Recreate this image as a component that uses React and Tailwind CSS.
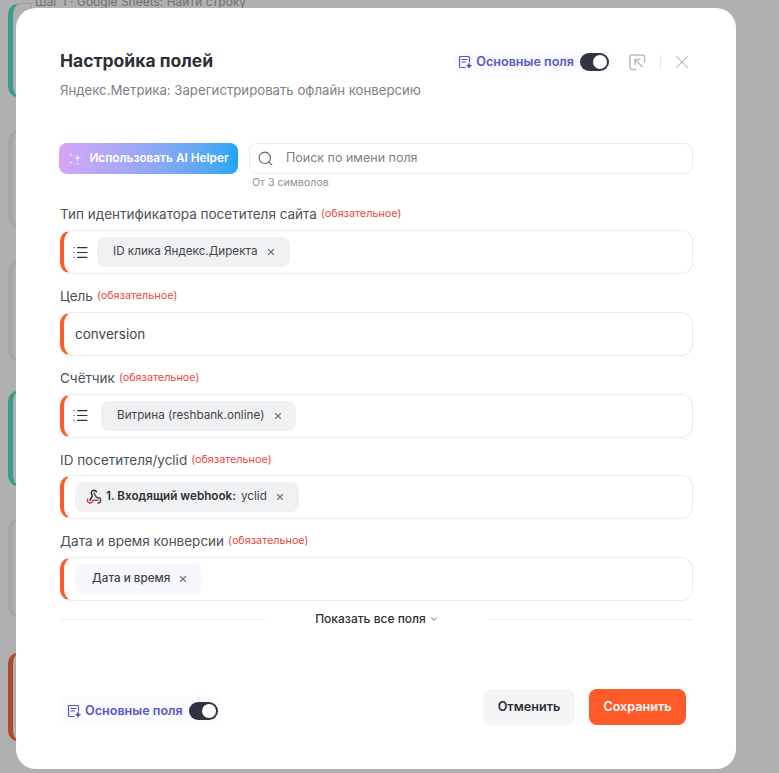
import { Search, X, List, ChevronDown } from 'lucide-react'

const font = { fontFamily: 'Inter, sans-serif' }

function FieldsIcon() {
  return (
    <svg width="14" height="14" viewBox="0 0 14 14" fill="none" stroke="#5856c8" strokeWidth="1.2" strokeLinecap="round" strokeLinejoin="round">
      <path d="M7 12.5H2.5a1 1 0 0 1-1-1v-9a1 1 0 0 1 1-1h8a1 1 0 0 1 1 1V7" />
      <path d="M4 4.5h5M4 7h3.5" />
      <path d="M11 8.5l.6 1.6 1.6.6-1.6.6-.6 1.6-.6-1.6-1.6-.6 1.6-.6z" fill="#5856c8" />
    </svg>
  )
}

function MainFields({ className }) {
  return (
    <div className={`flex items-center gap-[4px] rounded-lg bg-[#fafaff] ${className}`}>
      <FieldsIcon />
      <span className="text-[12.6px] font-semibold text-[#5856c8]">Основные поля</span>
      <div className="ml-[2px] flex h-[18px] w-[29px] items-center justify-end rounded-full bg-[#2f3440] pr-[2px]">
        <div className="h-[14px] w-[14px] rounded-full bg-white" />
      </div>
    </div>
  )
}

function Required() {
  return <span className="text-[10.8px] text-[#ef4444]">(обязательное)</span>
}

function Field({ label, children }) {
  return (
    <div>
      <div className="flex h-[19px] items-center gap-[4px] text-[13.5px] text-[#4b5157]">
        {label} <Required />
      </div>
      <div className="mt-[6px] flex h-[44px] items-center rounded-xl border border-[#e9ebee] border-l-[4px] border-l-[#ff5a29] bg-white pl-[1px]">
        {children}
      </div>
    </div>
  )
}

function Chip({ children, className }) {
  return (
    <div className={`flex h-[30px] items-center rounded-lg text-[11.7px] text-[#3f454b] ${className}`}>
      {children}
      <X size={10} strokeWidth={2.6} className="text-[#6b7177]" />
    </div>
  )
}

function ListIcon() {
  return <List size={17} strokeWidth={1.7} className="ml-[7px] mr-[8px] shrink-0 text-[#2b3036]" />
}

function WebhookIcon() {
  return (
    <svg width="16" height="16" viewBox="0 0 24 24" fill="none" strokeWidth="2.2" strokeLinecap="round" strokeLinejoin="round">
      <path stroke="#c73a63" d="M18 16.98h-5.99c-1.1 0-1.95.94-2.48 1.9A4 4 0 0 1 2 17c.01-.7.2-1.4.57-2" />
      <path stroke="#1f2328" d="m6 17 3.13-5.78c.53-.97.1-2.18-.5-3.1a4 4 0 1 1 6.89-4.06" />
      <path stroke="#4b4b4b" d="m12 6 3.13 5.73C15.66 12.7 16.9 13 18 13a4 4 0 0 1 0 8" />
    </svg>
  )
}

function Strip({ className }) {
  return <div className={`absolute left-[8px] w-[24px] rounded-l-xl border border-l-[5px] border-[#a2a2a2] ${className}`} />
}

export default function App() {
  return (
    <div className="relative h-[773px] w-[779px] overflow-hidden bg-[#b0b0b0]" style={font}>
      <div className="absolute left-[35px] top-[-7px] text-[12px] text-[#707070]">Шаг 1 · Google Sheets: Найти строку</div>
      <Strip className="top-[3px] h-[95px] border-l-[#3a9f8a]" />
      <Strip className="top-[130px] h-[98px] border-l-[#a6a6a6]" />
      <Strip className="top-[260px] h-[102px] border-l-[#a6a6a6]" />
      <Strip className="top-[390px] h-[97px] border-l-[#3a9f8a]" />
      <Strip className="top-[518px] h-[100px] border-l-[#a6a6a6]" />
      <Strip className="top-[652px] h-[90px] border-l-[#b04a2c]" />

      <div className="relative ml-[16px] mt-[8px] flex h-[761px] w-[720px] flex-col rounded-[20px] bg-white pl-[44px] pr-[43px] pt-[43px]">
        <div className="flex items-start justify-between">
          <div>
            <div className="text-[17.5px] font-bold leading-[20px] text-[#2b3036]">Настройка полей</div>
            <div className="mt-[10px] text-[13.2px] leading-[18px] text-[#7d8287]">Яндекс.Метрика: Зарегистрировать офлайн конверсию</div>
          </div>
          <div className="flex items-center">
            <MainFields className="h-[22px] pl-[4px] pr-[2px]" />
            <svg className="ml-[18px]" width="17" height="17" viewBox="0 0 17 17" fill="none" stroke="#bcbfc3" strokeWidth="1.6" strokeLinecap="round" strokeLinejoin="round">
              <path d="M15.5 8V3a2 2 0 0 0-2-2H3a2 2 0 0 0-2 2v10.5a2 2 0 0 0 2 2h4" />
              <path d="M6 5.5h5M6 5.5v5M6 5.5l7 7" />
            </svg>
            <div className="ml-[14px] h-[15px] w-px bg-[#e6e8ea]" />
            <X size={22} strokeWidth={1.1} className="ml-[10px] text-[#a9adb1]" />
          </div>
        </div>

        <div className="mt-[44px] flex items-start gap-[11px]">
          <button className="ml-[-1px] flex h-[31px] w-[179px] items-center justify-center gap-[7px] rounded-lg bg-gradient-to-r from-[#d6a5f7] to-[#19a7f5] text-[11.8px] font-semibold text-white">
            <svg width="14" height="14" viewBox="0 0 14 14" fill="#f3e9ff" opacity=".85">
              <path d="M9.5 2l.9 3.1 3.1.9-3.1.9-.9 3.1-.9-3.1L5.5 6l3.1-.9z" />
              <path d="M3 1l.5 1.5L5 3l-1.5.5L3 5l-.5-1.5L1 3l1.5-.5z" />
              <path d="M3 8.500l.5 1.500 1.500.5-1.500.5L3 12.500l-.5-1.500L1 10.500l1.500-.5z" />
              <path d="M9.500 10.500l.4 1.100 1.100.4-1.100.4-.4 1.100-.4-1.100L8 12l1.100-.4z" />
            </svg>
            Использовать AI Helper
          </button>
          <div className="flex-1">
            <div className="flex h-[31px] items-center rounded-lg border border-[#e9ebee] pl-[7px]">
              <Search size={17} strokeWidth={1.5} className="text-[#5c6166]" />
              <span className="ml-[12px] text-[12.5px] text-[#7d8287]">Поиск по имени поля</span>
            </div>
            <div className="ml-[3px] mt-[2px] text-[10.6px] leading-[14px] text-[#8c9196]">От 3 символов</div>
          </div>
        </div>

        <div className="mt-[15px] flex flex-col gap-[12.75px]">
          <Field label="Тип идентификатора посетителя сайта">
            <ListIcon />
            <Chip className="gap-[8px] bg-[#eff1f3] pl-[16px] pr-[14px]">ID клика Яндекс.Директа</Chip>
          </Field>
          <Field label="Цель">
            <span className="ml-[10px] text-[13.5px] text-[#3f454b]">conversion</span>
          </Field>
          <Field label="Счётчик">
            <ListIcon />
            <div className="ml-[4px]">
              <Chip className="gap-[9px] bg-[#eff1f3] pl-[16px] pr-[13px]">Витрина (reshbank.online)</Chip>
            </div>
          </Field>
          <Field label="ID посетителя/yclid">
            <div className="ml-[10px]">
              <Chip className="bg-[#eff1f3] pl-[11px] pr-[14px]">
                <WebhookIcon />
                <span className="ml-[4px] font-semibold text-[#2b3036]">1. Входящий webhook:</span>
                <span className="ml-[5px] mr-[8px]">yclid</span>
              </Chip>
            </div>
          </Field>
          <Field label="Дата и время конверсии">
            <div className="ml-[10px]">
              <Chip className="gap-[8px] bg-[#f5f7fd] pl-[17px] pr-[14px] font-medium">Дата и время</Chip>
            </div>
          </Field>
        </div>

        <div className="mt-[9px] flex items-center">
          <div className="h-px w-[205px] bg-[#eceef0]" />
          <div className="flex flex-1 items-center justify-center gap-[3px] text-[12px] font-medium text-[#2b3036]">
            Показать все поля
            <ChevronDown size={10} strokeWidth={2} className="text-[#4b5157]" />
          </div>
          <div className="h-px w-[204px] bg-[#eceef0]" />
        </div>

        <div className="mt-[61px] flex items-end justify-between pr-[7px]">
          <MainFields className="ml-[1px] h-[28px] pl-[6px] pr-[1px]" />
          <div className="flex gap-[14px]">
            <button className="h-[36px] w-[92px] rounded-lg bg-[#f3f5f7] text-[12.6px] font-semibold text-[#2b3036]">Отменить</button>
            <button className="h-[36px] w-[97px] rounded-lg bg-[#ff5a29] text-[12.6px] font-semibold text-white">Сохранить</button>
          </div>
        </div>
      </div>
    </div>
  )
}
